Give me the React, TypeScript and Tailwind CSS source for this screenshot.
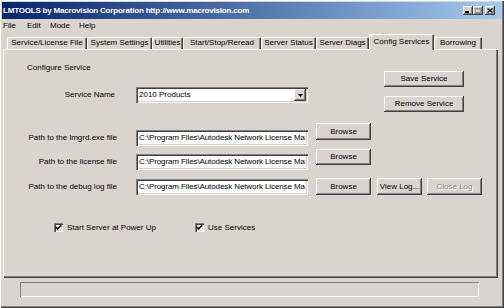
import React from "react";

const raised =
  "shadow-[inset_-1px_-1px_#404040,inset_1px_1px_#ffffff,inset_-2px_-2px_#808080]";
const sunken =
  "shadow-[inset_1px_1px_#808080,inset_2px_2px_#404040,inset_-1px_-1px_#ffffff,inset_-2px_-2px_#d4d0c8]";

const tabs = [
  { label: "Service/License File", w: "w-[80px]" },
  { label: "System Settings", w: "w-[65px]" },
  { label: "Utilities", w: "w-[31px]" },
  { label: "Start/Stop/Reread", w: "w-[78px]" },
  { label: "Server Status", w: "w-[55px]" },
  { label: "Server Diags", w: "w-[53px]" },
  { label: "Config Services", w: "w-[65px]", active: true },
  { label: "Borrowing", w: "w-[48px]" },
];

// the field only shows this much of the path
const pathValue = "C:\\Program Files\\Autodesk Network License Ma";

function Btn({ label, className, disabled }: { label: string; className: string; disabled?: boolean }) {
  return (
    <div className={`flex items-center justify-center bg-[#dad4cf] ${raised} ${className}`}>
      <span
        className={
          disabled ? "text-[#8c8884] [text-shadow:1px_1px_0_#ffffff]" : "text-black"
        }
      >
        {label}
      </span>
    </div>
  );
}

function Field({ value }: { value: string }) {
  return (
    <div className={`w-[172px] h-[16px] bg-white ${sunken} flex items-center pl-[3px] overflow-hidden whitespace-nowrap tracking-[-0.1px]`}>
      {value}
    </div>
  );
}

function Check({ label }: { label: string }) {
  return (
    <div className="flex items-center">
      <div className={`w-[9px] h-[9px] bg-white ${sunken} flex items-center justify-center`}>
        <svg width="7" height="7" viewBox="0 0 7 7">
          <polyline points="0.8,3 2.6,4.8 6.2,1.2" fill="none" stroke="#000" strokeWidth="1.6" />
        </svg>
      </div>
      <span className="ml-[4px]">{label}</span>
    </div>
  );
}

export default function App() {
  return (
    <div className="w-[504px] h-[308px] bg-[#dad4cf] font-['Liberation_Sans',Arial,sans-serif] text-[8px] leading-none text-black shadow-[inset_1px_1px_#ffffff,inset_-1px_-1px_#404040,inset_-2px_-2px_#808080] pt-[2px] overflow-hidden">
      {/* title bar */}
      <div className="mx-[2px] h-[17px] bg-gradient-to-r from-[#0a246a] to-[#a6caf0] flex items-center">
        <span className="pl-[1px] text-white font-bold text-[8px] tracking-[-0.2px] whitespace-nowrap">
          LMTOOLS by Macrovision Corporation http://www.macrovision.com
        </span>
        <div className="ml-auto mr-[7px] flex items-center">
          <div className={`w-[10px] h-[9px] bg-[#dad4cf] ${raised} flex items-end justify-start pl-[2px] pb-[2px]`}>
            <div className="w-[4px] h-[2px] bg-black" />
          </div>
          <div className={`w-[10px] h-[9px] bg-[#dad4cf] ${raised} flex items-center justify-center`}>
            <svg width="6" height="5" viewBox="0 0 6 5">
              <rect x="0.5" y="0.5" width="5" height="4" fill="none" stroke="#9a9692" />
              <line x1="0" y1="1" x2="6" y2="1" stroke="#9a9692" />
            </svg>
          </div>
          <div className={`ml-[2px] w-[10px] h-[9px] bg-[#dad4cf] ${raised} flex items-center justify-center`}>
            <svg width="6" height="5" viewBox="0 0 6 5">
              <path d="M0.5 0.5 L5.5 4.5 M5.5 0.5 L0.5 4.5" stroke="#000" strokeWidth="1.3" />
            </svg>
          </div>
        </div>
      </div>

      {/* menu */}
      <div className="h-[13px] flex items-center pl-[3px]">
        <span className="w-[24px]">File</span>
        <span className="w-[23px]">Edit</span>
        <span className="w-[29px]">Mode</span>
        <span>Help</span>
      </div>

      {/* tabs */}
      <div className="h-[17px] flex items-end pl-[7px]">
        {tabs.map((t) =>
          t.active ? (
            <div
              key={t.label}
              className={`${t.w} h-[16px] -mb-px relative z-10 bg-[#dad4cf] rounded-t-[2px] shadow-[inset_1px_1px_#ffffff,inset_-1px_0_#404040,inset_-2px_0_#808080] flex items-start justify-center pt-[4px] whitespace-nowrap`}
            >
              {t.label}
            </div>
          ) : (
            <div
              key={t.label}
              className={`${t.w} h-[12px] rounded-t-[2px] shadow-[inset_1px_1px_#ffffff,inset_-1px_0_#404040,inset_-2px_0_#808080] flex items-center justify-center whitespace-nowrap`}
            >
              {t.label}
            </div>
          )
        )}
      </div>

      {/* panel */}
      <div className="ml-[3px] w-[495px] h-[229px] shadow-[inset_1px_1px_#ffffff,inset_-1px_-1px_#404040,inset_-2px_-2px_#808080]">
        <div className="flex">
          <div className="w-[305px]">
            <div className="mt-[14px] h-[10px] pl-[24px] flex items-center">Configure Service</div>
            <div className="mt-[14px] flex items-center">
              <div className="w-[112px] text-right">Service Name</div>
              <div className={`ml-[21px] w-[172px] h-[16px] bg-white ${sunken} flex items-center pl-[3px] pr-[2px]`}>
                <span>2010 Products</span>
                <div className={`ml-auto w-[12px] h-[12px] bg-[#dad4cf] ${raised} flex items-center justify-center`}>
                  <svg width="5" height="3" viewBox="0 0 5 3">
                    <path d="M0 0 H5 L2.5 3 Z" fill="#000" />
                  </svg>
                </div>
              </div>
            </div>
          </div>
          <div className="ml-[76px] pt-[22px] flex flex-col gap-[9px]">
            <Btn label="Save Service" className="w-[80px] h-[16px]" />
            <Btn label="Remove Service" className="w-[80px] h-[16px]" />
          </div>
        </div>

        <div className="mt-[11px] flex items-start">
          <div className="mt-[7px] w-[114px] h-[16px] flex items-center justify-end">Path to the lmgrd.exe file</div>
          <div className="mt-[7px] ml-[19px]">
            <Field value={pathValue} />
          </div>
          <Btn label="Browse" className="ml-[8px] w-[55px] h-[17px]" />
        </div>

        <div className="mt-[3px] flex items-start">
          <div className="mt-[5px] w-[114px] h-[16px] flex items-center justify-end">Path to the license file</div>
          <div className="mt-[5px] ml-[19px]">
            <Field value={pathValue} />
          </div>
          <Btn label="Browse" className="ml-[8px] w-[55px] h-[16px]" />
        </div>

        <div className="mt-[8px] flex items-start">
          <div className="mt-[1px] w-[114px] h-[16px] flex items-center justify-end">Path to the debug log file</div>
          <div className="mt-[1px] ml-[19px]">
            <Field value={pathValue} />
          </div>
          <Btn label="Browse" className="ml-[8px] w-[55px] h-[17px]" />
          <Btn label="View Log..." className="ml-[6px] w-[45px] h-[17px]" />
          <Btn label="Close Log" className="ml-[5px] w-[55px] h-[17px]" disabled />
        </div>

        <div className="mt-[26px] h-[13px] flex items-center pl-[51px]">
          <div className="w-[141px]">
            <Check label="Start Server at Power Up" />
          </div>
          <Check label="Use Services" />
        </div>
      </div>

      {/* status bar */}
      <div className="mt-[4px] ml-[20px] w-[459px] h-[15px] shadow-[inset_1px_1px_#808080,inset_-1px_-1px_#ffffff]" />
    </div>
  );
}
